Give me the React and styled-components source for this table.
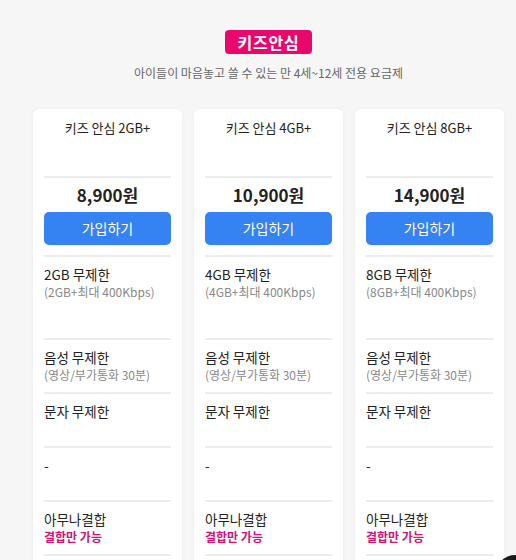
import React from 'react';
import styled, { createGlobalStyle } from 'styled-components';

const plans = [
  { name: '키즈 안심 2GB+', price: '8,900원', data: '2GB 무제한', dataSub: '(2GB+최대 400Kbps)' },
  { name: '키즈 안심 4GB+', price: '10,900원', data: '4GB 무제한', dataSub: '(4GB+최대 400Kbps)' },
  { name: '키즈 안심 8GB+', price: '14,900원', data: '8GB 무제한', dataSub: '(8GB+최대 400Kbps)' },
];

const App = () => {
  return (
    <>
      <GlobalStyle />
      <Page>
        <Header>
          <Badge>키즈안심</Badge>
          <Subtitle>아이들이 마음놓고 쓸 수 있는 만 4세~12세 전용 요금제</Subtitle>
        </Header>
        <Cards>
          {plans.map((plan) => (
            <Card key={plan.name}>
              <PlanName>{plan.name}</PlanName>
              <PriceBlock>
                <Price>{plan.price}</Price>
                <JoinButton type="button">가입하기</JoinButton>
              </PriceBlock>
              <Feature $tall>
                <FeatureTitle>{plan.data}</FeatureTitle>
                <FeatureSub>{plan.dataSub}</FeatureSub>
              </Feature>
              <Feature>
                <FeatureTitle>음성 무제한</FeatureTitle>
                <FeatureSub>(영상/부가통화 30분)</FeatureSub>
              </Feature>
              <Feature>
                <FeatureTitle>문자 무제한</FeatureTitle>
              </Feature>
              <Feature>
                <FeatureTitle>-</FeatureTitle>
              </Feature>
              <Feature>
                <FeatureTitle>아무나결합</FeatureTitle>
                <FeatureSub $accent>결합만 가능</FeatureSub>
              </Feature>
              <Feature>
                <FeatureTitle>&nbsp;</FeatureTitle>
              </Feature>
            </Card>
          ))}
        </Cards>
      </Page>
      <FloatButton />
    </>
  );
};

// ========== STYLED COMPONENTS ========== //
const GlobalStyle = createGlobalStyle`
  html, body {
    margin: 0;
    padding: 0;
    background: #f6f6f6;
    overflow: hidden;
  }
  body {
    font-family: "Noto Sans CJK KR", "Noto Sans", sans-serif;
    color: #222;
  }
`;
const Page = styled.main`
  box-sizing: border-box;
  width: 516px;
  height: 560px;
  padding: 0 12px 0 33px;
  overflow: hidden;
`;
const Header = styled.header`
  display: flex;
  flex-direction: column;
  align-items: center;
  padding-top: 30px;
`;
const Badge = styled.h1`
  margin: 0;
  height: 24px;
  padding: 0 12px;
  border-radius: 4px;
  background: #e6086b;
  color: #fff;
  font-size: 16px;
  font-weight: 700;
  line-height: 24px;
  letter-spacing: 0.8px;
`;
const Subtitle = styled.p`
  margin: 10px 0 0;
  color: #666;
  font-size: 12px;
  line-height: 18px;
`;
const Cards = styled.section`
  display: flex;
  gap: 12px;
  margin-top: 27px;
`;
const Card = styled.article`
  flex: 0 0 149px;
  box-sizing: border-box;
  padding: 0 11px;
  background: #fff;
  border-radius: 6px;
  box-shadow: 0 0 4px rgba(0, 0, 0, 0.04);
`;
const PlanName = styled.h2`
  margin: 0;
  height: 67px;
  padding-top: 9px;
  box-sizing: border-box;
  text-align: center;
  font-size: 13px;
  font-weight: 400;
  line-height: 20px;
`;
const PriceBlock = styled.div`
  display: flex;
  flex-direction: column;
  border-top: 2px solid #ececec;
  padding: 6px 0 10px;
`;
const Price = styled.strong`
  text-align: center;
  font-size: 17px;
  font-weight: 700;
  line-height: 22px;
`;
const JoinButton = styled.button`
  margin-top: 6px;
  height: 33px;
  border: 0;
  border-radius: 5px;
  background: #3583f2;
  color: #fff;
  font-family: inherit;
  font-size: 14px;
  line-height: 33px;
  padding: 0;
`;
const Feature = styled.div`
  display: flex;
  flex-direction: column;
  box-sizing: border-box;
  min-height: ${(props) => (props.$tall ? '83px' : '54px')};
  padding-top: 8px;
  border-top: 2px solid #ececec;
`;
const FeatureTitle = styled.span`
  font-size: 13.5px;
  line-height: 18px;
  color: #222;
`;
const FeatureSub = styled.span`
  font-size: 12px;
  line-height: 17px;
  color: ${(props) => (props.$accent ? '#d1127a' : '#888')};
  font-weight: ${(props) => (props.$accent ? 700 : 400)};
`;
const FloatButton = styled.div`
  position: fixed;
  left: 496px;
  top: 555px;
  width: 38px;
  height: 38px;
  border-radius: 50%;
  background: #1a1a1a;
`;

export default App;
